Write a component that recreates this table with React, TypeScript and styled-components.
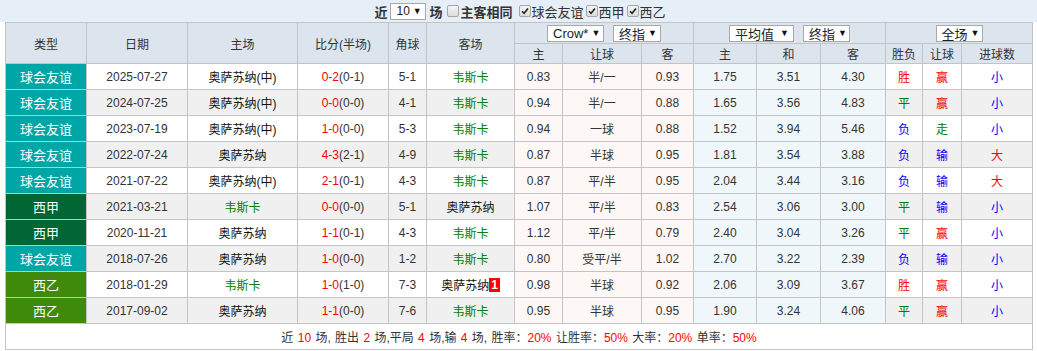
import React from 'react'
import styled, { createGlobalStyle } from 'styled-components'

const RED = '#ff0000'
const GREEN = '#008000'
const BLUE = '#0000ff'

const GlobalStyle = createGlobalStyle`
  body {
    margin: 0;
    background: #fff;
    font-family: "Liberation Sans", "Noto Sans CJK SC", sans-serif;
    font-size: 12px;
    color: #333;
  }
`

type Row = {
  type: string
  date: string
  home: string
  score: string
  half: string
  corner: string
  away: string
  hOdds: string
  line: string
  aOdds: string
  w: string
  d: string
  l: string
  res: string
  pan: string
  goal: string
  homeIsUs?: boolean
  badge?: string
}

const rows: Row[] = [
  { type: '球会友谊', date: '2025-07-27', home: '奥萨苏纳(中)', score: '0-2', half: '(0-1)', corner: '5-1', away: '韦斯卡', hOdds: '0.83', line: '半/一', aOdds: '0.93', w: '1.75', d: '3.51', l: '4.30', res: '胜', pan: '赢', goal: '小', homeIsUs: true },
  { type: '球会友谊', date: '2024-07-25', home: '奥萨苏纳(中)', score: '0-0', half: '(0-0)', corner: '4-1', away: '韦斯卡', hOdds: '0.94', line: '半/一', aOdds: '0.88', w: '1.65', d: '3.56', l: '4.83', res: '平', pan: '赢', goal: '小', homeIsUs: true },
  { type: '球会友谊', date: '2023-07-19', home: '奥萨苏纳(中)', score: '1-0', half: '(0-0)', corner: '5-3', away: '韦斯卡', hOdds: '0.94', line: '一球', aOdds: '0.88', w: '1.52', d: '3.94', l: '5.46', res: '负', pan: '走', goal: '小', homeIsUs: true },
  { type: '球会友谊', date: '2022-07-24', home: '奥萨苏纳', score: '4-3', half: '(2-1)', corner: '4-9', away: '韦斯卡', hOdds: '0.87', line: '半球', aOdds: '0.95', w: '1.81', d: '3.54', l: '3.88', res: '负', pan: '输', goal: '大', homeIsUs: true },
  { type: '球会友谊', date: '2021-07-22', home: '奥萨苏纳(中)', score: '2-1', half: '(0-1)', corner: '4-3', away: '韦斯卡', hOdds: '0.87', line: '平/半', aOdds: '0.95', w: '2.04', d: '3.44', l: '3.16', res: '负', pan: '输', goal: '大', homeIsUs: true },
  { type: '西甲', date: '2021-03-21', home: '韦斯卡', score: '0-0', half: '(0-0)', corner: '5-1', away: '奥萨苏纳', hOdds: '1.07', line: '平/半', aOdds: '0.83', w: '2.54', d: '3.06', l: '3.00', res: '平', pan: '输', goal: '小' },
  { type: '西甲', date: '2020-11-21', home: '奥萨苏纳', score: '1-1', half: '(0-1)', corner: '4-3', away: '韦斯卡', hOdds: '1.12', line: '平/半', aOdds: '0.79', w: '2.40', d: '3.04', l: '3.26', res: '平', pan: '赢', goal: '小', homeIsUs: true },
  { type: '球会友谊', date: '2018-07-26', home: '奥萨苏纳', score: '1-0', half: '(0-0)', corner: '1-2', away: '韦斯卡', hOdds: '0.80', line: '受平/半', aOdds: '1.02', w: '2.70', d: '3.22', l: '2.39', res: '负', pan: '输', goal: '小', homeIsUs: true },
  { type: '西乙', date: '2018-01-29', home: '韦斯卡', score: '1-0', half: '(1-0)', corner: '7-3', away: '奥萨苏纳', hOdds: '0.98', line: '半球', aOdds: '0.92', w: '2.06', d: '3.09', l: '3.67', res: '胜', pan: '赢', goal: '小', badge: '1' },
  { type: '西乙', date: '2017-09-02', home: '奥萨苏纳', score: '1-1', half: '(0-0)', corner: '7-6', away: '韦斯卡', hOdds: '0.95', line: '半球', aOdds: '0.95', w: '1.90', d: '3.24', l: '4.06', res: '平', pan: '赢', goal: '小', homeIsUs: true },
]

const typeColor: Record<string, string> = {
  球会友谊: '#00a6a6',
  西甲: '#006633',
  西乙: '#3f8a0b',
}

const markColor: Record<string, string> = {
  胜: RED,
  赢: RED,
  大: RED,
  平: GREEN,
  走: GREEN,
  负: BLUE,
  输: BLUE,
  小: BLUE,
}

const widths = [81, 101, 110, 91, 38, 88, 48, 79, 52, 63, 64, 65, 37, 39, 71]

const FilterBar = styled.div`
  height: 22px;
  background: #e6eef8;
  display: flex;
  align-items: center;
  justify-content: center;
  font-size: 13px;
  color: #333;
`

const Strong = styled.b`
  font-weight: bold;
  margin: 0 3px;
`

const Label = styled.span<{ $bold?: boolean }>`
  font-weight: ${p => (p.$bold ? 'bold' : 'normal')};
`

const Gap = styled.span`
  width: 4px;
`

const Box = styled.span`
  display: inline-flex;
  align-items: center;
  justify-content: center;
  width: 10px;
  height: 10px;
  margin: 0 1px 0 2px;
  border: 1px solid #a6a6a6;
  border-radius: 2px;
  background: linear-gradient(#f4f4f4, #dcdcdc);
`

const Drop = styled.span<{ $w: number; $small?: boolean }>`
  display: inline-flex;
  align-items: center;
  justify-content: space-between;
  box-sizing: border-box;
  width: ${p => p.$w}px;
  height: 17px;
  padding: 0 4px 0 5px;
  background: #fff;
  border: 1px solid #a9a9a9;
  font-size: ${p => (p.$small ? 12 : 13)}px;
  font-weight: normal;
  color: #222;
  white-space: nowrap;
  flex-shrink: 0;
`

const Arrow = styled.span`
  font-size: 9px;
  color: #111;
  margin-left: 3px;
`

const TableWrap = styled.div`
  padding: 0 5px;
`

const Grid = styled.table`
  width: 1027px;
  border-collapse: collapse;
  table-layout: fixed;
  border: 1px solid #c4c4c4;
`

const Head = styled.th<{ $h?: number }>`
  height: ${p => p.$h ?? 20}px;
  padding: 0;
  background: #dce4ee;
  border: 1px solid #c4c4c4;
  font-weight: normal;
  font-size: 12px;
  color: #333;
  text-align: center;
`

const SelectRow = styled.div`
  display: flex;
  justify-content: center;
  gap: 9px;
`

const Cell = styled.td<{ $bg?: string; $color?: string }>`
  height: 25px;
  padding: 0;
  border: 1px solid #c4c4c4;
  text-align: center;
  background: ${p => p.$bg ?? 'transparent'};
  color: ${p => p.$color ?? '#333'};
  white-space: nowrap;
`

const TypeCell = styled(Cell)<{ $league: string }>`
  background: ${p => typeColor[p.$league]};
  color: #fff;
  font-size: 13px;
`

const DataRow = styled.tr<{ $alt: boolean }>`
  background: ${p => (p.$alt ? '#f0f0f0' : '#fff')};
`

const Red = styled.span`
  color: ${RED};
`

const Badge = styled.span`
  display: inline-block;
  background: #ff0000;
  color: #fff;
  font-weight: bold;
  font-size: 12px;
  line-height: 14px;
  padding: 0 2px;
  vertical-align: 1px;
`

const FootCell = styled.td`
  height: 25px;
  padding: 0;
  text-align: center;
  background: #fff;
  border: 1px solid #c4c4c4;
  color: #333;
  word-spacing: 1px;
`

const Check: React.FC = () => (
  <Box>
    <svg width="8" height="8" viewBox="0 0 8 8">
      <path d="M1 4.2 L3.1 6.3 L7 1.6" fill="none" stroke="#222" strokeWidth="1.6" />
    </svg>
  </Box>
)

const Team: React.FC<{ name: string; us: boolean; badge?: string }> = ({ name, us, badge }) => (
  <Cell $color={us ? '#111' : GREEN}>
    {name}
    {badge && <Badge>{badge}</Badge>}
  </Cell>
)

export default function App() {
  return (
    <>
      <GlobalStyle />
      <FilterBar>
        <Strong>近</Strong>
        <Drop $w={36} $small>
          10<Arrow>▼</Arrow>
        </Drop>
        <Strong>场</Strong>
        <Box />
        <Label $bold>主客相同</Label>
        <Gap />
        <Check />
        <Label>球会友谊</Label>
        <Check />
        <Label>西甲</Label>
        <Check />
        <Label>西乙</Label>
      </FilterBar>
      <TableWrap>
        <Grid>
          <colgroup>
            {widths.map((w, i) => (
              <col key={i} style={{ width: w }} />
            ))}
          </colgroup>
          <thead>
            <tr>
              <Head rowSpan={2}>类型</Head>
              <Head rowSpan={2}>日期</Head>
              <Head rowSpan={2}>主场</Head>
              <Head rowSpan={2}>比分(半场)</Head>
              <Head rowSpan={2}>角球</Head>
              <Head rowSpan={2}>客场</Head>
              <Head colSpan={3}>
                <SelectRow>
                  <Drop $w={57}>Crow*<Arrow>▼</Arrow></Drop>
                  <Drop $w={48}>终指<Arrow>▼</Arrow></Drop>
                </SelectRow>
              </Head>
              <Head colSpan={3}>
                <SelectRow>
                  <Drop $w={65}>平均值<Arrow>▼</Arrow></Drop>
                  <Drop $w={47}>终指<Arrow>▼</Arrow></Drop>
                </SelectRow>
              </Head>
              <Head colSpan={3}>
                <SelectRow>
                  <Drop $w={47}>全场<Arrow>▼</Arrow></Drop>
                </SelectRow>
              </Head>
            </tr>
            <tr>
              <Head $h={19}>主</Head>
              <Head $h={19}>让球</Head>
              <Head $h={19}>客</Head>
              <Head $h={19}>主</Head>
              <Head $h={19}>和</Head>
              <Head $h={19}>客</Head>
              <Head $h={19}>胜负</Head>
              <Head $h={19}>让球</Head>
              <Head $h={19}>进球数</Head>
            </tr>
          </thead>
          <tbody>
            {rows.map((r, i) => (
              <DataRow key={r.date} $alt={i % 2 === 1}>
                <TypeCell $league={r.type}>{r.type}</TypeCell>
                <Cell>{r.date}</Cell>
                <Team name={r.home} us={!!r.homeIsUs} />
                <Cell>
                  <Red>{r.score}</Red>
                  {r.half}
                </Cell>
                <Cell>{r.corner}</Cell>
                <Team name={r.away} us={!r.homeIsUs} badge={r.badge} />
                <Cell $bg="#fdf8f5">{r.hOdds}</Cell>
                <Cell $bg="#fdf8f5">{r.line}</Cell>
                <Cell $bg="#fdf8f5">{r.aOdds}</Cell>
                <Cell $bg="#eff7fb">{r.w}</Cell>
                <Cell $bg="#eff7fb">{r.d}</Cell>
                <Cell $bg="#eff7fb">{r.l}</Cell>
                <Cell $color={markColor[r.res]}>{r.res}</Cell>
                <Cell $color={markColor[r.pan]}>{r.pan}</Cell>
                <Cell $color={markColor[r.goal]}>{r.goal}</Cell>
              </DataRow>
            ))}
            <tr>
              <FootCell colSpan={15}>
                近 <Red>10</Red> 场, 胜出 <Red>2</Red> 场,平局 <Red>4</Red> 场,输 <Red>4</Red> 场, 胜率：<Red>20%</Red> 让胜率：<Red>50%</Red> 大率：<Red>20%</Red> 单率：<Red>50%</Red>
              </FootCell>
            </tr>
          </tbody>
        </Grid>
      </TableWrap>
    </>
  )
}
